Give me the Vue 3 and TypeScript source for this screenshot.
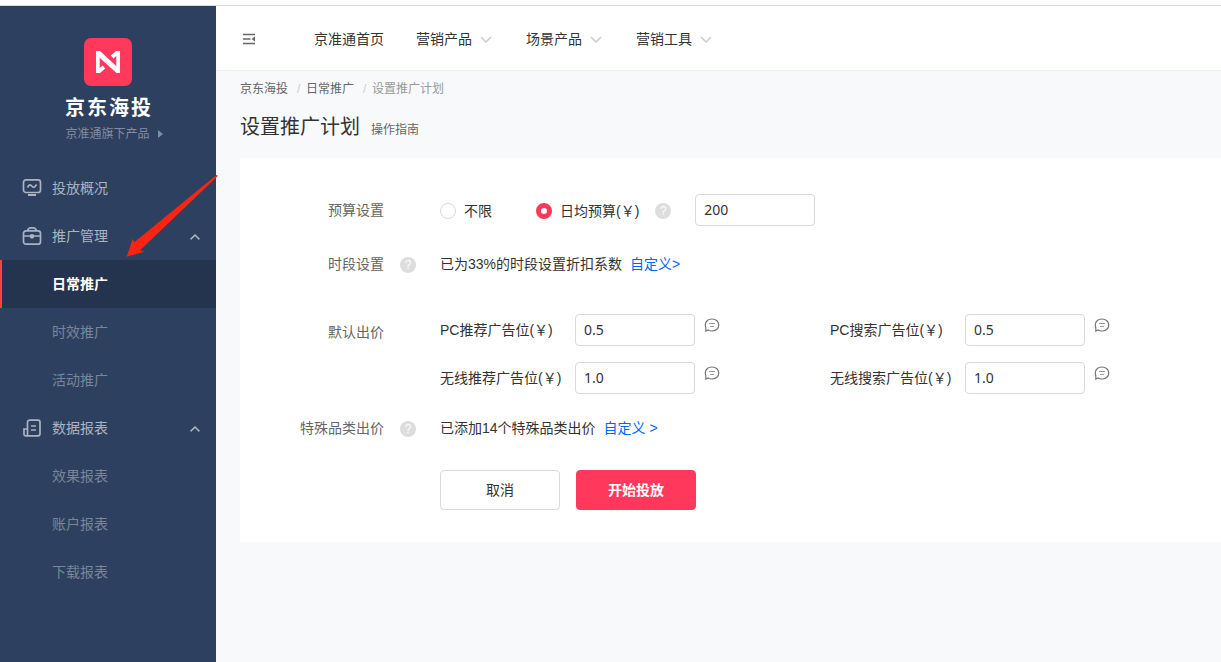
<script setup lang="ts">
import { ref } from 'vue'

interface MenuGroup {
  label: string
  icon: 'monitor' | 'case' | 'report'
  children: string[]
}

interface BidField {
  id: string
  label: string
  value: string
}

const groups: MenuGroup[] = [
  { label: '投放概况', icon: 'monitor', children: [] },
  { label: '推广管理', icon: 'case', children: ['日常推广', '时效推广', '活动推广'] },
  { label: '数据报表', icon: 'report', children: ['效果报表', '账户报表', '下载报表'] },
]
const active = '日常推广'
const navItems = ['营销产品', '场景产品', '营销工具']

const budgetMode = ref<'none' | 'daily'>('daily')
const budget = ref('200')
const bids = ref<BidField[]>([
  { id: 'pc-rec', label: 'PC推荐广告位(￥)', value: '0.5' },
  { id: 'pc-search', label: 'PC搜索广告位(￥)', value: '0.5' },
  { id: 'wl-rec', label: '无线推荐广告位(￥)', value: '1.0' },
  { id: 'wl-search', label: '无线搜索广告位(￥)', value: '1.0' },
])
</script>

<template>
  <div class="page">
    <aside class="sidebar">
      <div class="brand">
        <svg class="logo" viewBox="0 0 48 48" aria-hidden="true">
          <rect width="48" height="48" rx="7" fill="#ff385c" />
          <g fill="#fff">
            <path d="M12 13h3.700v22H12zM32.300 13H36v22h-3.700z" />
            <path d="M12 13h4L36 31.500V35h-3.500L12 16.500z" />
            <path d="M12 35h4l5.200-4.500-2.700-3L14 31.500zM36 13h-4l-5.200 4.500 2.700 3L34 16.500z" />
          </g>
        </svg>
        <strong class="brand-name">京东海投</strong>
        <a class="brand-sub" href="#">京准通旗下产品
          <svg viewBox="0 0 5 8" width="5" height="8" aria-hidden="true"><path d="M0 0 5 4 0 8z" fill="currentColor" /></svg>
        </a>
      </div>
      <nav class="menu">
        <template v-for="group in groups" :key="group.label">
          <button class="group" type="button">
            <svg class="group-icon" viewBox="0 0 20 20" fill="none" stroke="currentColor" stroke-width="1.700" aria-hidden="true">
              <template v-if="group.icon === 'monitor'">
                <rect x="1.500" y="1.800" width="17" height="12.700" rx="2.500" />
                <path d="M5.500 9.500C7.500 5.800 8.500 6.500 10 8.200s2.500 1.600 4.500-1.700" />
                <path d="M6 17h8" stroke-width="2" />
              </template>
              <template v-else-if="group.icon === 'case'">
                <rect x="1.500" y="4.800" width="17" height="13.400" rx="2.500" />
                <path d="M5.500 4.800C6.200 2.600 7 1.800 8.500 1.800h3c1.500 0 2.300.8 3 3M1.500 10h17" />
                <circle cx="10" cy="10.300" r="1.500" fill="currentColor" />
              </template>
              <template v-else>
                <path d="M5.500 17.800V4.200a2 2 0 0 1 2-2h8.500a2 2 0 0 1 2 2v11.600a2 2 0 0 1-2 2H3.500a1.500 1.500 0 0 1-1.500-1.500V11h3.500M9 8h5M9 12h5" />
              </template>
            </svg>
            <span>{{ group.label }}</span>
            <svg v-if="group.children.length" class="caret" viewBox="0 0 10 6" fill="none" stroke="currentColor" stroke-width="1.500" aria-hidden="true"><path d="M.6 5.400 5 1l4.400 4.400" /></svg>
          </button>
          <a v-for="child in group.children" :key="child" href="#" class="child" :class="{ active: child === active }">{{ child }}</a>
        </template>
      </nav>
    </aside>

    <div class="content">
      <header class="topbar">
        <button class="collapse" type="button" aria-label="收起菜单">
          <svg viewBox="0 0 14 12" width="14" height="12" aria-hidden="true">
            <path d="M1 1.500h12M1 6h7.500M1 10.500h12" stroke="#666" stroke-width="1.500" />
            <path d="M13 3.500v5L9.500 6z" fill="#666" />
          </svg>
        </button>
        <nav class="topnav">
          <a href="#">京准通首页</a>
          <a v-for="item in navItems" :key="item" href="#">{{ item }}
            <svg viewBox="0 0 12 7" width="12" height="7" fill="none" stroke="#ccc" stroke-width="1.500" aria-hidden="true"><path d="M1 1l5 5 5-5" /></svg>
          </a>
        </nav>
      </header>

      <main class="main">
        <nav class="crumbs">
          <a href="#">京东海投</a><i>/</i><a href="#">日常推广</a><i>/</i><span>设置推广计划</span>
        </nav>
        <div class="heading">
          <h1>设置推广计划</h1>
          <a href="#">操作指南</a>
        </div>

        <form class="card" @submit.prevent>
          <div class="row">
            <span class="label">预算设置</span>
            <div class="field">
              <label class="radio first"><input v-model="budgetMode" type="radio" name="budget" value="none" />不限</label>
              <label class="radio"><input v-model="budgetMode" type="radio" name="budget" value="daily" />日均预算(￥)</label>
              <span class="help after-radio">?</span>
              <input v-model="budget" class="text" type="text" aria-label="日均预算" />
            </div>
          </div>

          <div class="row schedule">
            <span class="label">时段设置</span>
            <span class="help">?</span>
            <div class="field">已为33%的时段设置折扣系数<a class="link" href="#">自定义&gt;</a></div>
          </div>

          <div class="row bids-row">
            <span class="label">默认出价</span>
            <div class="bids">
              <div v-for="bid in bids" :key="bid.id" class="bid">
                <label :for="bid.id">{{ bid.label }}</label>
                <input :id="bid.id" v-model="bid.value" class="text" type="text" />
                <svg class="note" viewBox="0 0 16 14" fill="none" stroke="#777" aria-hidden="true">
                  <path d="M1.800 13V9.500C.2 5 2.800 1 8 1c4 0 6.800 2.600 6.800 6S12 13 8 13c-2 0-3-.4-3.800-1z" stroke-width="1.200" />
                  <path d="M5 5.500h6M6 8.500h4" stroke="#999" />
                </svg>
              </div>
            </div>
          </div>

          <div class="row special">
            <span class="label">特殊品类出价</span>
            <span class="help">?</span>
            <div class="field">已添加14个特殊品类出价<a class="link" href="#">自定义 &gt;</a></div>
          </div>

          <div class="actions">
            <button type="button">取消</button>
            <button type="submit" class="primary">开始投放</button>
          </div>
        </form>
      </main>
    </div>

    <svg class="pointer" viewBox="0 0 92 82" aria-hidden="true">
      <path d="M90.500 0 8.300 67.300 6.700 64 .7 81.700 18.300 76.700 14 75.300 92 .8z" fill="#ff2412" />
    </svg>
  </div>
</template>

<style>
body {
  margin: 0;
  background: #f7f9fb;
}
</style>

<style scoped>
* {
  box-sizing: border-box;
}
.page {
  position: relative;
  display: flex;
  min-height: 100vh;
  border-top: 5px solid #fff;
  background: #f7f9fb;
  color: #333;
  font: 14px/20px "Liberation Sans", "Noto Sans CJK SC", sans-serif;
}
a {
  color: inherit;
  text-decoration: none;
}
button {
  padding: 0;
  border: 0;
  background: none;
  color: inherit;
  font: inherit;
  cursor: pointer;
}
.sidebar {
  flex: 0 0 216px;
  border-top: 1px solid #d9dadc;
  background: #2e405f;
  color: #abb3bf;
}
.brand {
  display: flex;
  flex-direction: column;
  align-items: center;
  height: 158px;
  padding-top: 32px;
}
.logo {
  width: 48px;
  height: 48px;
}
.brand-name {
  margin-top: 8px;
  padding-left: 2px;
  color: #fff;
  font-size: 20px;
  line-height: 28px;
  letter-spacing: 2px;
}
.brand-sub {
  display: flex;
  align-items: center;
  gap: 8px;
  margin-top: 2px;
  padding-left: 12px;
  color: #828c9f;
  font-size: 12px;
  line-height: 20px;
}
.group {
  display: flex;
  align-items: center;
  width: 100%;
  height: 48px;
  padding: 0 16px 0 22px;
}
.group-icon {
  width: 20px;
  height: 20px;
  margin-right: 10px;
}
.caret {
  width: 10px;
  height: 6px;
  margin-top: 2px;
  margin-left: auto;
}
.child {
  display: block;
  padding-left: 52px;
  color: #7a8599;
  line-height: 48px;
}
.child.active {
  padding-left: 50px;
  border-left: 2px solid #ff4040;
  background: #25344e;
  color: #fff;
  font-weight: 700;
}
.content {
  flex: 1;
  min-width: 0;
}
.topbar {
  display: flex;
  align-items: center;
  height: 66px;
  padding-top: 2px;
  padding-left: 26px;
  border-top: 1px solid #d9dadc;
  border-bottom: 1px solid #eef0f3;
  background: #fff;
}
.collapse {
  display: flex;
}
.topnav {
  display: flex;
  gap: 32px;
  margin-left: 58px;
}
.topnav a {
  display: flex;
  align-items: center;
  gap: 8px;
}
.topnav a + a + a {
  margin-left: 2px;
}
.main {
  padding: 8px 0 0 24px;
}
.crumbs {
  display: flex;
  color: #666;
  font-size: 12px;
  line-height: 20px;
}
.crumbs i {
  width: 18px;
  padding-left: 9px;
  color: #ccc;
  font-style: normal;
}
.crumbs span {
  color: #999;
}
.heading {
  display: flex;
  align-items: baseline;
  gap: 11px;
  margin-top: 12px;
  color: #666;
  font-size: 12px;
}
h1 {
  margin: 0;
  color: #333;
  font-size: 20px;
  font-weight: 400;
  line-height: 32px;
}
.card {
  margin-top: 15px;
  padding: 36px 0 32px;
  background: #fff;
}
.row {
  display: flex;
  align-items: center;
}
.label {
  width: 144px;
  color: #666;
  text-align: right;
}
.field {
  display: flex;
  align-items: center;
  margin-left: auto;
  width: calc(100% - 200px);
}
.help {
  flex: none;
  width: 16px;
  height: 16px;
  margin-top: 2px;
  margin-left: 16px;
  border-radius: 50%;
  background: #ddd;
  color: #fff;
  font-size: 12px;
  line-height: 16px;
  text-align: center;
}
.help.after-radio {
  margin-right: 24px;
}
.radio {
  display: flex;
  align-items: center;
  gap: 8px;
  padding-top: 2px;
}
.radio.first {
  margin-right: 44px;
}
.radio input {
  appearance: none;
  width: 16px;
  height: 16px;
  margin: 0;
  border: 1px solid #d9d9d9;
  border-radius: 50%;
  background: #fff;
}
.radio input:checked {
  border: 5px solid #ff385c;
}
.text {
  width: 120px;
  height: 32px;
  padding: 0 8px 2px;
  border: 1px solid #d9d9d9;
  border-radius: 4px;
  background: #fff;
  color: #333;
  font: 14px/20px "Noto Sans", "Noto Sans CJK SC", sans-serif;
}
.schedule {
  margin-top: 28px;
}
.link {
  margin-left: 8px;
  color: #0066ff;
}
.bids-row {
  margin-top: 40px;
  align-items: flex-start;
}
.bids-row .label {
  line-height: 36px;
}
.bids {
  display: grid;
  grid-template-columns: 390px 1fr;
  row-gap: 16px;
  margin-left: 56px;
}
.bid {
  display: flex;
  align-items: center;
}
.bid label {
  width: 135px;
}
.note {
  align-self: flex-start;
  width: 16px;
  height: 14px;
  margin: 4px 0 0 9px;
}
.special {
  margin-top: 24px;
}
.actions {
  display: flex;
  gap: 16px;
  margin: 32px 0 0 200px;
}
.actions button {
  width: 120px;
  height: 40px;
  border: 1px solid #d9d9d9;
  border-radius: 4px;
  background: #fff;
}
.actions .primary {
  border-color: #ff385c;
  background: #ff385c;
  color: #fff;
  font-weight: 700;
}
.pointer {
  position: absolute;
  top: 170px;
  left: 126px;
  width: 92px;
  height: 82px;
  pointer-events: none;
}
</style>
